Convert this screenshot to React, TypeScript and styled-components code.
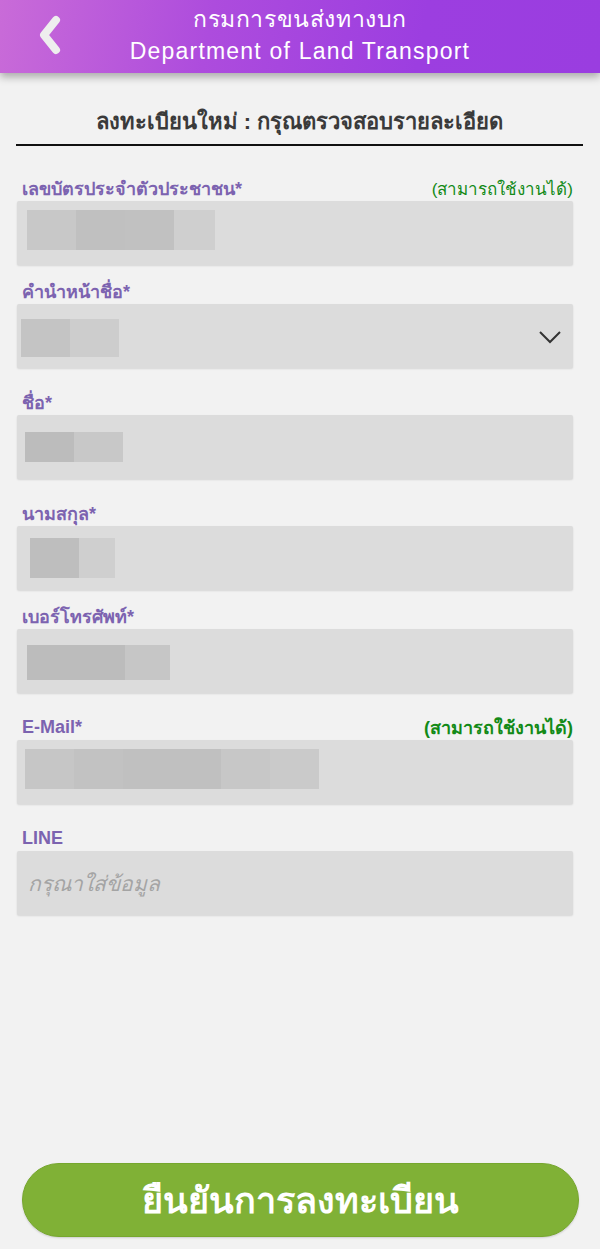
import styled, { createGlobalStyle } from "styled-components";

const GlobalStyle = createGlobalStyle`
	html, body {
		margin: 0;
		padding: 0;
		background: #f2f2f2;
	}
	body {
		font-family: "Liberation Sans", "Noto Sans", "DejaVu Sans", sans-serif;
	}
`;

const Page = styled.div`
	display: flex;
	flex-direction: column;
	width: 600px;
	min-height: 1249px;
	background: #f2f2f2;
`;

const Header = styled.header`
	position: relative;
	display: flex;
	flex-direction: column;
	align-items: center;
	justify-content: center;
	height: 73px;
	padding-bottom: 3px;
	box-sizing: border-box;
	background: linear-gradient(100deg, #c96bd8 0%, #ad4cdd 35%, #9c3ee0 70%, #9a3de0 100%);
	box-shadow: 0 4px 8px rgba(0, 0, 0, 0.3);
	color: #ffffff;
`;

const BackButton = styled.button`
	position: absolute;
	left: 32px;
	top: 12px;
	width: 36px;
	height: 46px;
	padding: 0;
	border: none;
	background: transparent;
	display: flex;
	align-items: center;
	justify-content: center;
`;

const HeaderLine = styled.div<{ $spacing: number }>`
	font-size: 23px;
	line-height: 32px;
	letter-spacing: ${({ $spacing }) => $spacing}px;
	white-space: nowrap;
`;

const Content = styled.main`
	display: flex;
	flex-direction: column;
	padding: 35px 0 0 0;
`;

const Heading = styled.h1`
	margin: 0 17px 0 16px;
	padding-bottom: 8px;
	border-bottom: 2px solid #111111;
	text-align: center;
	font-size: 22px;
	font-weight: 700;
	line-height: 28px;
	color: #3a3a3a;
`;

const Form = styled.form`
	display: flex;
	flex-direction: column;
	padding: 29px 27px 0 17px;
`;

const Field = styled.div<{ $gap: number }>`
	display: flex;
	flex-direction: column;
	margin-bottom: ${({ $gap }) => $gap}px;
`;

const LabelRow = styled.div`
	display: flex;
	align-items: center;
	justify-content: space-between;
	height: 26px;
	padding: 0 0 0 5px;
`;

const Label = styled.label`
	font-size: 18px;
	font-weight: 700;
	color: #7c63b0;
`;

const Status = styled.span<{ $bold?: boolean }>`
	font-size: ${({ $bold }) => ($bold ? 18 : 17)}px;
	font-weight: ${({ $bold }) => ($bold ? 700 : 400)};
	color: #138a17;
`;

const InputBox = styled.div`
	position: relative;
	display: flex;
	align-items: center;
	height: 64px;
	background: #dcdcdc;
	border-radius: 2px;
	box-shadow: 0 1px 2px rgba(0, 0, 0, 0.12);
`;

const Redacted = styled.div<{ $left: number; $h: number; $dy: number }>`
	display: flex;
	height: ${({ $h }) => $h}px;
	margin-left: ${({ $left }) => $left}px;
	margin-top: ${({ $dy }) => $dy}px;
`;

const Cell = styled.div<{ $w: number; $c: string }>`
	width: ${({ $w }) => $w}px;
	height: 100%;
	background: ${({ $c }) => $c};
`;

const Placeholder = styled.span`
	margin-left: 11px;
	font-size: 21px;
	font-style: italic;
	color: #a4a4a4;
`;

const Chevron = styled.div`
	position: absolute;
	right: 11px;
	top: 26px;
	display: flex;
`;

const Spacer = styled.div`
	flex: 1;
`;

const Submit = styled.button`
	margin: 0 21px 12px 22px;
	height: 74px;
	border: 1px solid #76a72e;
	border-radius: 37px;
	background: #80b136;
	color: #ffffff;
	font-family: inherit;
	font-size: 36px;
	font-weight: 700;
	box-shadow: 0 1px 2px rgba(0, 0, 0, 0.15);
`;

type Block = { left: number; h: number; dy: number; cells: [number, string][] };

const fields: {
	label: string;
	status?: "normal" | "bold";
	gap: number;
	block?: Block;
	select?: boolean;
	placeholder?: string;
}[] = [
	{
		label: "เลขบัตรประจำตัวประชาชน*",
		status: "normal",
		gap: 13,
		block: {
			left: 10,
			h: 40,
			dy: -6,
			cells: [
				[49, "#c8c8c8"],
				[49, "#c0c0c0"],
				[49, "#c1c1c1"],
				[41, "#cfcfcf"],
			],
		},
	},
	{
		label: "คำนำหน้าชื่อ*",
		gap: 21,
		select: true,
		block: {
			left: 4,
			h: 38,
			dy: 4,
			cells: [
				[49, "#c4c4c4"],
				[49, "#cdcdcd"],
			],
		},
	},
	{
		label: "ชื่อ*",
		gap: 21,
		block: {
			left: 8,
			h: 30,
			dy: 0,
			cells: [
				[49, "#bcbcbc"],
				[49, "#c8c8c8"],
			],
		},
	},
	{
		label: "นามสกุล*",
		gap: 13,
		block: {
			left: 13,
			h: 40,
			dy: 0,
			cells: [
				[49, "#bebebe"],
				[36, "#cfcfcf"],
			],
		},
	},
	{
		label: "เบอร์โทรศัพท์*",
		gap: 21,
		block: {
			left: 10,
			h: 35,
			dy: 2,
			cells: [
				[98, "#bcbcbc"],
				[45, "#c6c6c6"],
			],
		},
	},
	{
		label: "E-Mail*",
		status: "bold",
		gap: 21,
		block: {
			left: 8,
			h: 40,
			dy: -6,
			cells: [
				[49, "#c6c6c6"],
				[49, "#c2c2c2"],
				[49, "#c0c0c0"],
				[49, "#c0c0c0"],
				[49, "#c7c7c7"],
				[49, "#cacaca"],
			],
		},
	},
	{
		label: "LINE",
		gap: 0,
		placeholder: "กรุณาใส่ข้อมูล",
	},
];

export default function App() {
	return (
		<Page>
			<GlobalStyle />
			<Header>
				<BackButton aria-label="back">
					<svg width="28" height="42" viewBox="0 0 28 42">
						<path
							d="M20 6 L8 21 L20 36"
							fill="none"
							stroke="#eeeeee"
							strokeWidth="8"
							strokeLinecap="round"
							strokeLinejoin="round"
						/>
					</svg>
				</BackButton>
				<HeaderLine $spacing={0.6}>กรมการขนส่งทางบก</HeaderLine>
				<HeaderLine $spacing={1.2}>Department of Land Transport</HeaderLine>
			</Header>
			<Content>
				<Heading>ลงทะเบียนใหม่ : กรุณตรวจสอบรายละเอียด</Heading>
				<Form>
					{fields.map((f) => (
						<Field key={f.label} $gap={f.gap}>
							<LabelRow>
								<Label>{f.label}</Label>
								{f.status && (
									<Status $bold={f.status === "bold"}>(สามารถใช้งานได้)</Status>
								)}
							</LabelRow>
							<InputBox>
								{f.block && (
									<Redacted $left={f.block.left} $h={f.block.h} $dy={f.block.dy}>
										{f.block.cells.map(([w, c], i) => (
											<Cell key={i} $w={w} $c={c} />
										))}
									</Redacted>
								)}
								{f.placeholder && <Placeholder>{f.placeholder}</Placeholder>}
								{f.select && (
									<Chevron>
										<svg width="24" height="14" viewBox="0 0 24 14">
											<path
												d="M2 2 L12 12 L22 2"
												fill="none"
												stroke="#333333"
												strokeWidth="2"
											/>
										</svg>
									</Chevron>
								)}
							</InputBox>
						</Field>
					))}
				</Form>
			</Content>
			<Spacer />
			<Submit type="button">ยืนยันการลงทะเบียน</Submit>
		</Page>
	);
}
